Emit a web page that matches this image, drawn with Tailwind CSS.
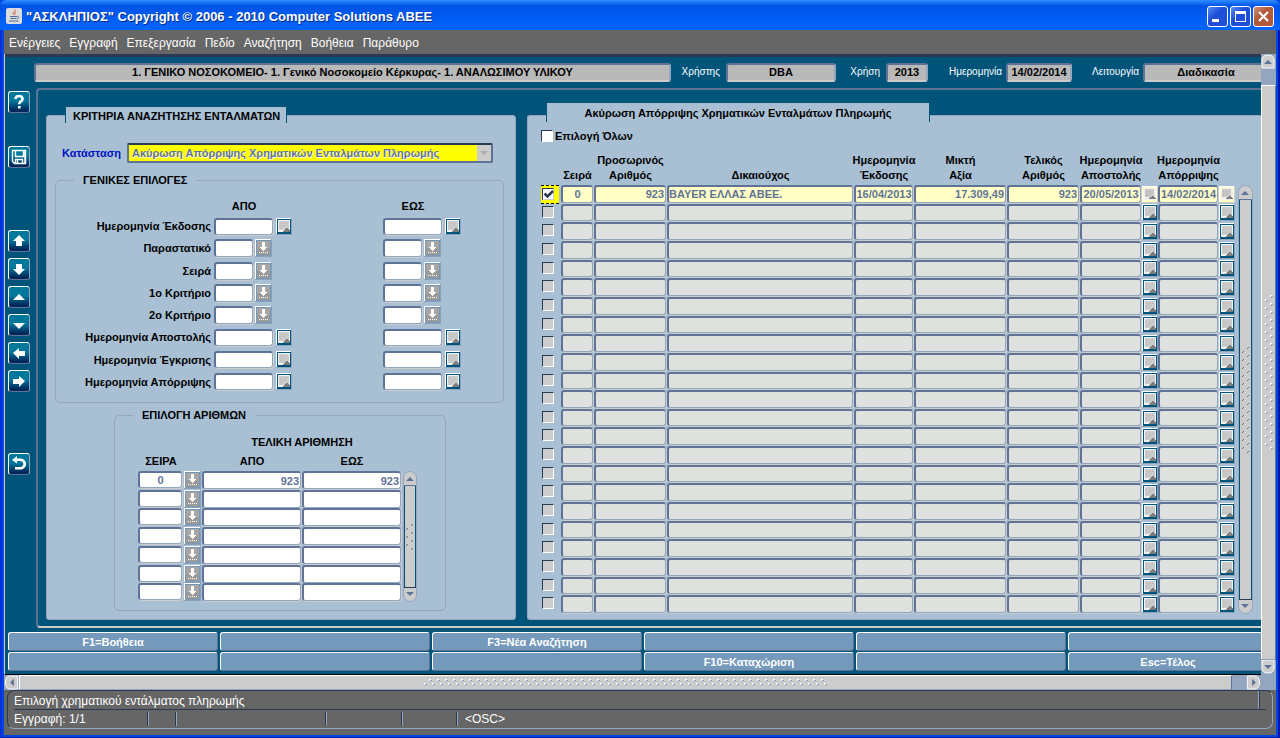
<!DOCTYPE html>
<html lang="el">
<head>
<meta charset="utf-8">
<title>ΑΣΚΛΗΠΙΟΣ</title>
<script src="https://cdn.jsdelivr.net/npm/@tailwindcss/browser@4"></script>
</head>
<body class="min-h-screen min-w-[1280px] flex flex-col bg-[#0047e0] font-['Liberation_Sans',Arial,sans-serif] text-[11px] leading-[14px]">

<svg class="hidden" aria-hidden="true">
  <symbol id="cal" viewBox="0 0 16 17" shape-rendering="crispEdges">
    <path d="M0 0h16v17H0z" fill="#8ba5bf"/><path d="M0 0h15v1H1v15H0z" fill="#fff"/>
    <path d="M1 1h14v15H1z" fill="#00547a"/><path d="M2 2h12v12H2z" fill="#f4f4f4"/>
    <path d="M3 3h10v9H3z" fill="#cbcbcb"/><path d="M4 5h1v1H4zM6 5h1v1H6zM8 5h1v1H8zM10 5h1v1h-1zM4 7h1v1H4zM6 7h1v1H6zM8 7h1v1H8zM4 9h1v1H4zM6 9h1v1H6z" fill="#bababa"/>
    <path d="M10 10h2v1h1v1h1v2H7v-1h1v-1h1v-1h1z" fill="#7d7d7d"/>
  </symbol>
  <symbol id="calCurrent" viewBox="0 0 16 17" shape-rendering="crispEdges">
    <path d="M0 0h16v17H0z" fill="#ccc"/><path d="M0 0h15v1H1v15H0z" fill="#fff"/>
    <path d="M1 1h14v15H1z" fill="#ffffc6"/><path d="M2 2h12v12H2z" fill="#f0f0f0"/>
    <path d="M3 3h9v8H3z" fill="#c8c8c8"/><path d="M4 5h1v1H4zM6 5h1v1H6zM8 5h1v1H8zM4 7h1v1H4zM6 7h1v1H6zM8 7h1v1H8zM4 9h1v1H4zM6 9h1v1H6z" fill="#b4b4b4"/>
    <path d="M10 10h2v1h1v1h1v1H7v-1h1v-1h2z" fill="#7d7d7d"/>
  </symbol>
  <symbol id="lov" viewBox="0 0 17 18" shape-rendering="crispEdges">
    <path d="M0 0h17v18H0z" fill="#8ba0ba"/><path d="M0 0h16v1H1v16H0z" fill="#fff"/>
    <path d="M1 1h15v16H1z" fill="#7499bb"/><path d="M2 2h13v7H2z" fill="#a9a5a5"/><path d="M2 9h13v7H2z" fill="#9d9a9a"/>
    <path d="M7 3h3v5h2v1h-1v1h-1v1H9v1H8v-1H7v-1H6V9H5V8h2zM4 13h1v1H4zM6 13h1v1H6zM8 13h1v1H8zM10 13h1v1h-1zM12 13h1v1h-1z" fill="#fff"/>
  </symbol>
</svg>

<template id="tplCal"><button type="button" class="block w-4 h-[17px]" aria-label="Ημερολόγιο"><svg class="w-4 h-[17px]"><use href="#cal"/></svg></button></template>
<template id="tplLov"><button type="button" class="block w-[17px] h-[18px]" aria-label="Λίστα τιμών"><svg class="w-[17px] h-[18px]"><use href="#lov"/></svg></button></template>

<header class="h-[30px] flex items-center pl-[6px] pr-[6px] rounded-t-md bg-linear-to-b from-[#2f8cff] via-[#0053e6] via-20% to-[#0066ff]">
  <svg class="w-4 h-4 mt-[2px]" viewBox="0 0 16 16"><rect width="16" height="16" rx="2" fill="#dcdcdc"/><path d="M9 1.500c1 2-3 2.500-1.500 5M10 4c-1.500 1-1.500 1.500-1 3" stroke="#e0532c" fill="none"/><path d="M4 8.500h7M4.500 10.500h6M3 13h9.500M11.500 8.500c2 0 1.500 2-.5 2.200" stroke="#4a6a95" fill="none"/></svg>
  <h1 class="ml-1 mt-[3px] grow font-['Liberation_Sans',sans-serif] font-bold text-[13px] leading-4 text-white whitespace-nowrap [text-shadow:1px_1px_0_#0a2a80]">"ΑΣΚΛΗΠΙΟΣ" Copyright © 2006 - 2010 Computer Solutions ABEE</h1>
  <div class="flex gap-[2px] mt-[3px]">
    <button type="button" aria-label="Ελαχιστοποίηση" class="w-[21px] h-[21px] rounded-[3px] border border-white bg-linear-to-br from-[#5a8cf5] to-[#1f4fd8] to-40%"><svg class="w-full h-full" viewBox="0 0 19 19"><path d="M4 12h7v3H4z" fill="#fff"/></svg></button>
    <button type="button" aria-label="Μεγιστοποίηση" class="w-[21px] h-[21px] rounded-[3px] border border-white bg-linear-to-br from-[#5a8cf5] to-[#1f4fd8] to-40%"><svg class="w-full h-full" viewBox="0 0 19 19"><path d="M4 4h11v11H4zM5 7v7h9V7z" fill="#fff" fill-rule="evenodd"/></svg></button>
    <button type="button" aria-label="Κλείσιμο" class="w-[21px] h-[21px] rounded-[3px] border border-white bg-linear-to-br from-[#cf8f80] to-[#b05a3a] to-40%"><svg class="w-full h-full" viewBox="0 0 19 19"><path d="M5 5l9 9M14 5l-9 9" stroke="#fff" stroke-width="2.200"/></svg></button>
  </div>
</header>

<div class="grow flex flex-col border-x-2 border-b-2 border-[#0018b0] border-l-[#0831d9]">
<div class="grow flex flex-col mx-[2px] mb-[2px] bg-[#666]">
  <nav class="h-6 flex items-center gap-[9px] pl-[5px] pt-[2px] text-[12px] text-white whitespace-nowrap">
    <button type="button">Ενέργειες</button><button type="button">Εγγραφή</button><button type="button">Επεξεργασία</button><button type="button">Πεδίο</button><button type="button">Αναζήτηση</button><button type="button">Βοήθεια</button><button type="button">Παράθυρο</button>
  </nav>

  <div class="flex">
    <div class="grow min-w-0 flex flex-col bg-[#00547a] border-l border-[#ccc] border-b border-b-black">
      <div class="h-[3px] bg-[#2b3a52]"></div>
      <div class="flex">
        <aside class="w-[29px] shrink-0 pl-[3px] pt-[34px] flex flex-col gap-[6px]" id="tools"></aside>

        <div class="grow min-w-0">
          <div class="flex items-center h-5 mt-[5px] text-white whitespace-nowrap text-[10px]">
            <input aria-label="Μονάδα" readonly class="grow h-[19px] rounded-[3px] border-2 border-[#5f7396] border-r-[#94a5bf] border-b-[#ccc] bg-[#b9b9b9] text-center text-[11px] font-bold text-black" value="1. ΓΕΝΙΚΟ ΝΟΣΟΚΟΜΕΙΟ- 1. Γενικό Νοσοκομείο Κέρκυρας- 1. ΑΝΑΛΩΣΙΜΟΥ ΥΛΙΚΟΥ">
            <label for="user" class="w-[55px] pr-[6px] text-right">Χρήστης</label><input id="user" readonly class="w-[110px] h-[19px] rounded-[3px] border-2 border-[#5f7396] border-r-[#94a5bf] border-b-[#ccc] bg-[#b9b9b9] text-center text-[11px] font-bold text-black" value="DBA">
            <label for="year" class="w-[50px] pr-[6px] text-right">Χρήση</label><input id="year" readonly class="w-[42px] h-[19px] rounded-[3px] border-2 border-[#5f7396] border-r-[#94a5bf] border-b-[#ccc] bg-[#b9b9b9] text-center text-[11px] font-bold text-black" value="2013">
            <label for="date" class="w-[78px] pr-[4px] text-right">Ημερομηνία</label><input id="date" readonly class="w-[66px] h-[19px] rounded-[3px] border-2 border-[#5f7396] border-r-[#94a5bf] border-b-[#ccc] bg-[#b9b9b9] text-center text-[11px] font-bold text-black" value="14/02/2014">
            <label for="mode" class="w-[71px] pr-[4px] text-right">Λειτουργία</label><input id="mode" readonly class="w-[118px] h-[19px] pl-[6px] rounded-l-[3px] border-2 border-r-0 border-[#5f7396] border-b-[#ccc] bg-[#b9b9b9] text-center text-[11px] font-bold text-black" value="Διαδικασία">
          </div>

          <main class="mt-[6px] ml-[2px] pl-2 pt-[25px] pb-[6px] flex gap-[11px] border-2 border-r-0 rounded-l-[4px] border-[#5f7396] border-b-[#ccc]">
            <section class="w-[470px] shrink-0 pl-2 pb-2 border border-[#94a5bf] rounded-[3px] bg-[#a9c0d4]">
              <h2 class="w-[222px] h-4 -mt-[9px] ml-[10px] border-x border-[#00547a] bg-[#a9c0d4] pl-[7px] pt-[2px] font-bold whitespace-nowrap">ΚΡΙΤΗΡΙΑ ΑΝΑΖΗΤΗΣΗΣ ΕΝΤΑΛΜΑΤΩΝ</h2>
              <div class="mt-[20px] flex items-center pl-[7px] gap-[3px]">
                <label for="state" class="w-[62px] font-bold text-[#0010c0] whitespace-nowrap">Κατάσταση</label>
                <div class="relative w-[366px]">
                  <select id="state" class="block w-full h-5 appearance-none pl-[3px] rounded-[2px] border-2 border-[#5f7396] border-t-[#2b3a52] border-r-[#5f7396] bg-[#ff0] font-bold text-[#5f7396] [text-shadow:1px_1px_0_#fff]"><option>Ακύρωση Απόρριψης Χρηματικών Ενταλμάτων Πληρωμής</option></select>
                  <svg class="absolute right-[2px] top-[2px] w-[14px] h-4 bg-[#ccc] pointer-events-none" viewBox="0 0 14 16"><path d="M3 6h8l-4 4z" fill="#aaa"/></svg>
                </div>
              </div>

              <fieldset class="mt-[10px] mr-[11px] min-w-0 pt-[12px] pb-[9px] border border-[#94a5bf] rounded-[5px]">
                <legend class="ml-[18px] px-[9px] font-bold">ΓΕΝΙΚΕΣ ΕΠΙΛΟΓΕΣ</legend>
                <div class="flex pl-[158px] font-bold text-center"><span class="w-[60px] mr-[109px]">ΑΠΟ</span><span class="w-[60px]">ΕΩΣ</span></div>
                <div id="criteria" class="mt-[2px] grid auto-rows-fr h-[178px]"></div>
              </fieldset>

              <fieldset class="mt-[5px] ml-[59px] w-[332px] pl-[23px] pt-[13px] pb-2 border border-[#94a5bf] rounded-[5px]">
                <legend class="ml-[-5px] px-[9px] font-bold">ΕΠΙΛΟΓΗ ΑΡΙΘΜΩΝ</legend>
                <div class="flex gap-[1px]">
                  <table class="block font-bold">
                    <thead class="block text-center">
                      <tr class="grid grid-cols-[64px_200px]"><td></td><th>ΤΕΛΙΚΗ ΑΡΙΘΜΗΣΗ</th></tr>
                      <tr class="grid grid-cols-[46px_18px_100px_100px] mt-[5px] mb-[3px]"><th>ΣΕΙΡΑ</th><td></td><th>ΑΠΟ</th><th>ΕΩΣ</th></tr>
                    </thead>
                    <tbody id="numbers" class="grid auto-rows-fr h-[131px]"></tbody>
                  </table>
                  <div class="mt-9 w-[14px] h-[131px] flex flex-col rounded-full border border-[#94a5bf] bg-[#ccc] overflow-hidden" role="scrollbar" aria-controls="numbers" aria-valuenow="0">
                    <svg class="w-full h-[14px] shrink-0 border-b border-[#5f7396]" viewBox="0 0 12 13"><path d="M6 5l4 4H2z" fill="#5f7396"/></svg>
                    <div class="grow flex items-center justify-center border-x border-[#00547a]"><svg class="w-2 h-7" viewBox="0 0 8 28"><path d="M0 7l2-2M5 3l2-2M0 15l2-2M5 11l2-2M0 23l2-2M5 19l2-2M5 27l2-2" stroke="#5f7396"/></svg></div>
                    <svg class="w-full h-[14px] shrink-0 border-t border-[#2b3a52]" viewBox="0 0 12 13"><path d="M6 8l4-4H2z" fill="#5f7396"/></svg>
                  </div>
                </div>
              </fieldset>
            </section>

            <section class="grow pl-[13px] pr-2 pb-[5px] border border-r-0 border-[#94a5bf] rounded-l-[3px] bg-[#a9c0d4]">
              <h2 class="w-[384px] h-[19px] -mt-[13px] ml-[5px] border-x border-[#00547a] bg-[#a9c0d4] pt-[3px] font-bold text-center whitespace-nowrap">Ακύρωση Απόρριψης Χρηματικών Ενταλμάτων Πληρωμής</h2>
              <label class="mt-[7px] flex items-center gap-[2px] font-bold"><input type="checkbox" class="appearance-none w-3 h-3 bg-white border border-[#2b3a52] border-b-white border-r-white">Επιλογή Όλων</label>
              <div class="mt-[10px] flex gap-[3px] font-bold">
                <table class="block grow">
                  <thead class="block text-center leading-[15px] whitespace-nowrap">
                    <tr class="grid grid-cols-[20px_33px_73px_minmax(187px,1fr)_60px_93px_73px_62px_16px_61px_16px] items-end mb-[2px]">
                      <td></td>
                      <th class="flex justify-center">Σειρά</th><th class="flex justify-center">Προσωρινός<br>Αριθμός</th><th class="flex justify-center">Δικαιούχος</th><th class="flex justify-center">Ημερομηνία<br>Έκδοσης</th><th class="flex justify-center">Μικτή<br>Αξία</th><th class="flex justify-center">Τελικός<br>Αριθμός</th><th class="flex justify-center">Ημερομηνία<br>Αποστολής</th><td></td><th class="flex justify-center">Ημερομηνία<br>Απόρριψης</th><td></td>
                    </tr>
                  </thead>
                  <tbody id="orders" class="grid auto-rows-fr h-[429px]"></tbody>
                </table>
                <div class="mt-8 w-[15px] h-[429px] flex flex-col rounded-full border border-[#94a5bf] bg-[#ccc] overflow-hidden" role="scrollbar" aria-controls="orders" aria-valuenow="0">
                  <svg class="w-full h-[14px] shrink-0 border-b border-[#5f7396]" viewBox="0 0 13 13"><path d="M6 5l4 4H2z" fill="#5f7396"/></svg>
                  <div class="grow flex items-center justify-center border-x border-[#00547a]"><svg class="w-2 h-[108px]" viewBox="0 0 8 108"><defs><pattern id="ticks" width="8" height="8" patternUnits="userSpaceOnUse"><path d="M0 7l2-2M5 3l2-2" stroke="#5f7396"/></pattern></defs><rect width="8" height="108" fill="url(#ticks)"/></svg></div>
                  <svg class="w-full h-[14px] shrink-0 border-t border-[#2b3a52]" viewBox="0 0 13 13"><path d="M6 8l4-4H2z" fill="#5f7396"/></svg>
                </div>
              </div>
            </section>
          </main>
        </div>
      </div>

      <footer id="keys" class="mt-1 mb-[3px] ml-[3px] grid grid-cols-[repeat(5,210fr)_193fr] gap-x-[2px] gap-y-[1px]"></footer>
    </div>

    <div class="w-[15px] shrink-0 flex flex-col bg-[#94a5bf]" role="scrollbar" aria-label="Κατακόρυφη κύλιση" aria-valuenow="0">
      <svg class="w-full h-[15px] shrink-0" viewBox="0 0 15 15"><path d="M1 14V6q0-5 6-5t6 5v8z" fill="#ccc" stroke="#fff"/><path d="M7 6l4 4H3z" fill="#5f7396"/></svg>
      <div class="grow mt-4 border-l border-t border-white border-r border-r-[#5f7396] bg-[#ccc] flex items-center justify-center">
        <svg class="w-2 h-[156px]" viewBox="0 0 8 156"><defs><pattern id="dots" width="8" height="8" patternUnits="userSpaceOnUse"><path d="M0 4h2v2H0zM5 0h2v2H5z" fill="#fff"/><path d="M1 5h2v1H2v1H1zM6 1h2v1H7v1H6z" fill="#94a5bf"/></pattern></defs><rect width="8" height="156" fill="url(#dots)"/></svg>
      </div>
      <svg class="w-full h-4 shrink-0" viewBox="0 0 15 16"><path d="M1 1v8q0 5 6 5t6-5V1z" fill="#ccc" stroke="#fff"/><path d="M0 0h15" stroke="#5f7396"/><path d="M7 10l4-4H3z" fill="#5f7396"/></svg>
    </div>
  </div>

  <div class="h-[15px] flex bg-[#94a5bf] pr-[15px]" role="scrollbar" aria-label="Οριζόντια κύλιση" aria-valuenow="0">
    <svg class="w-[15px] h-[15px]" viewBox="0 0 15 16"><path d="M14 1H6Q1 1 1 8t5 7h8z" fill="#ccc" stroke="#fff"/><path d="M6 8l4-4v8z" fill="#5f7396"/></svg>
    <div class="grow mr-[14px] border border-white border-b-[#94a5bf] border-r-[#5f7396] bg-[#ccc] flex items-center justify-center">
      <svg class="w-[404px] h-2" viewBox="0 0 404 8"><rect width="404" height="8" fill="url(#dots)"/></svg>
    </div>
    <svg class="w-[15px] h-[15px]" viewBox="0 0 15 16"><path d="M1 1h7q6 0 6 7t-6 7H1z" fill="#ccc" stroke="#fff"/><path d="M10 8L6 4v8z" fill="#5f7396"/></svg>
  </div>

  <div class="mx-[3px] mb-[6px] px-[6px] rounded-[7px] border border-[#94a5bf] border-t-[#2b3a52] border-l-[#2b3a52] text-[12px] text-white">
    <div class="h-[19px] flex justify-between border-b border-[#2b3a52]"><p class="pt-[3px]">Επιλογή χρηματικού εντάλματος πληρωμής</p><i class="mr-[6px] w-[2px] border-l border-[#94a5bf] bg-[#2b3a52]"></i></div>
    <div class="h-[18px] flex items-center">
      <p class="w-[133px]">Εγγραφή: 1/1</p>
      <i class="w-[28px] h-[14px] border-l border-[#2b3a52] shadow-[inset_1px_0_#94a5bf]"></i>
      <i class="w-[150px] h-[14px] border-l border-[#2b3a52] shadow-[inset_1px_0_#94a5bf]"></i>
      <i class="w-[76px] h-[14px] border-l border-[#2b3a52] shadow-[inset_1px_0_#94a5bf]"></i>
      <i class="w-[55px] h-[14px] border-l border-[#2b3a52] shadow-[inset_1px_0_#94a5bf]"></i>
      <p class="h-[14px] pl-2 border-l border-[#2b3a52] shadow-[inset_1px_0_#94a5bf]">&lt;OSC&gt;</p>
    </div>
  </div>
</div>
</div>

<script>
const $ = id => document.getElementById(id);
const cal = $('tplCal').innerHTML, lov = $('tplLov').innerHTML;
const box = 'block min-w-0 rounded-[3px] border-t-2 border-l-2 border-r border-b border-[#5f7396] border-r-[#94a5bf] border-b-[#94a5bf] shadow-[1px_1px_0_#ccc] font-bold text-[#5f7396] ';

const arrows = {
  up: 'M10 4l6 6h-3v5H7v-5H4z', down: 'M7 5h6v5h3l-6 6-6-6h3z', prev: 'M4 13l6-6 6 6z', next: 'M4 8h12l-6 6z',
  left: 'M4 10l6-5v3h6v5h-6v3z', right: 'M16 10l-6-5v3H4v5h6v3z'
};
const fill = d => `<path d="${d}" fill="#fff"/>`;
const tools = [
  ['Βοήθεια', '<path d="M6.500 7q0-3 3.500-3t3.500 3q0 1.500-1.800 2.500-1.400.8-1.400 2.700M10.300 14v2.500" stroke="#fff" stroke-width="2.600" fill="none"/>', 'mb-[27px]'],
  ['Αποθήκευση', '<path d="M3.500 3.500h13v13h-11l-2-2zM6.500 3.500v6h8v-6M6.500 16.500v-4h7v4M8.500 13v3M16 16V4" stroke="#fff" stroke-width="1.400" fill="none"/>', 'mb-[56px]'],
  ['Πάνω', fill(arrows.up), ''], ['Κάτω', fill(arrows.down), ''], ['Προηγούμενο', fill(arrows.prev), ''],
  ['Επόμενο', fill(arrows.next), ''], ['Αριστερά', fill(arrows.left), ''], ['Δεξιά', fill(arrows.right), 'mb-[55px]'],
  ['Επιστροφή', '<path d="M3 6l5-4v2.500h3c8 0 8 11 0 11H6V13h5c4.500 0 4.500-6 0-6H8v2.500z" fill="#fff"/>', '']
];
$('tools').innerHTML = tools.map(([n, svg, m]) => `<button type="button" aria-label="${n}" class="w-[22px] h-[22px] shrink-0 rounded-[3px] border border-white border-r-[#94a5bf] border-b-[#5f7396] bg-linear-to-b from-[#00789c] from-45% to-[#00285a] to-90% ${m}"><svg class="w-5 h-5" viewBox="0 0 20 20">${svg}</svg></button>`).join('');

const criteria = [['Ημερομηνία Έκδοσης', 1], ['Παραστατικό', 0], ['Σειρά', 0], ['1ο Κριτήριο', 0], ['2ο Κριτήριο', 0], ['Ημερομηνία Αποστολής', 1], ['Ημερομηνία Έγκρισης', 1], ['Ημερομηνία Απόρριψης', 1]];
$('criteria').innerHTML = criteria.map(([t, d], i) => {
  const field = (id, l, w) => `<span class="${w} flex items-center ${d ? 'gap-[3px]' : 'gap-[2px]'}"><input ${id} ${l} class="${box}${d ? 'w-[59px] h-[17px] bg-white' : 'w-[39px] h-[18px] bg-white'}">${d ? cal : lov}</span>`;
  return `<div class="flex items-center"><label for="c${i}" class="w-[155px] mr-[3px] text-right font-bold whitespace-nowrap">${t}</label>${field(`id="c${i}"`, '', 'w-[169px]')}${field('', `aria-label="${t} έως"`, 'w-[80px]')}</div>`;
}).join('');

$('numbers').innerHTML = Array.from({length: 7}, (_, i) => `<tr class="grid grid-cols-[46px_18px_100px_100px]">
  <td class="flex pb-[2px] pr-[2px]"><input aria-label="Σειρά" class="${box}w-full bg-white text-center" value="${i ? '' : '0'}"></td>
  <td>${lov}</td>
  <td class="flex pb-[1px] pr-[1px]"><input aria-label="Από" class="${box}w-full px-[1px] bg-white text-right" value="${i ? '' : '923'}"></td>
  <td class="flex pb-[1px] pr-[1px]"><input aria-label="Έως" class="${box}w-full px-[1px] bg-white text-right" value="${i ? '' : '923'}"></td></tr>`).join('');

const first = ['0', '923', 'BAYER ΕΛΛΑΣ ΑΒΕΕ.', '16/04/2013', '17.309,49', '923', '20/05/2013', null, '14/02/2014', null];
const align = ['text-center', 'px-[1px] text-right', 'text-left', 'text-center', 'px-[1px] text-right', 'px-[1px] text-right', 'text-center', '', 'text-center', ''];
const names = ['Σειρά', 'Προσωρινός Αριθμός', 'Δικαιούχος', 'Ημερομηνία Έκδοσης', 'Μικτή Αξία', 'Τελικός Αριθμός', 'Ημερομηνία Αποστολής', '', 'Ημερομηνία Απόρριψης', ''];
$('orders').innerHTML = Array.from({length: 23}, (_, i) => {
  const on = i === 0;
  const tick = on
    ? '<td class="relative mr-[2px] pl-[1px] border-y border-dashed border-black bg-[#ff0]"><input type="checkbox" checked aria-label="Επιλογή" class="block mt-[2px] appearance-none w-3 h-3 bg-white border border-[#2b3a52] border-b-[#ccc] border-r-[#ccc]"><svg class="absolute left-[2px] top-[3px] w-[11px] h-[11px] pointer-events-none" viewBox="0 0 11 11"><path d="M1.500 4.500l3 3L10 2" stroke="#2b3a52" stroke-width="2.600" fill="none"/></svg></td>'
    : '<td class="pl-[1px]"><input type="checkbox" aria-label="Επιλογή" class="block mt-[2px] appearance-none w-3 h-3 bg-[#ccc] border border-[#2b3a52] border-b-white border-r-white"></td>';
  return `<tr class="grid grid-cols-[20px_33px_73px_minmax(187px,1fr)_60px_93px_73px_62px_16px_61px_16px]">${tick}${first.map((v, k) => v === null
    ? `<td class="flex items-center">${on ? cal.replaceAll('#cal', '#calCurrent') : cal}</td>`
    : `<td class="flex pb-[1px] pr-[1px]"><input aria-label="${names[k]}" class="${box}w-full ${on ? 'bg-[#ffffc6]' : 'bg-[#dee1de]'} ${align[k]}" value="${on ? v : ''}"></td>`).join('')}</tr>`;
}).join('');

const keys = ['F1=Βοήθεια', '', 'F3=Νέα Αναζήτηση', '', '', '', '', '', '', 'F10=Καταχώριση', '', 'Esc=Τέλος'];
$('keys').innerHTML = keys.map((t, i) => `<button type="button" aria-label="${t || 'Κενό'}" class="h-[19px] ${i % 6 === 5 ? 'rounded-l-[3px] border border-r-0 pl-[6px]' : 'rounded-[3px] border'} border-white border-r-[#5f7396] border-b-[#5f7396] bg-[#7499bb] font-bold text-white">${t}</button>`).join('');
</script>
</body>
</html>
